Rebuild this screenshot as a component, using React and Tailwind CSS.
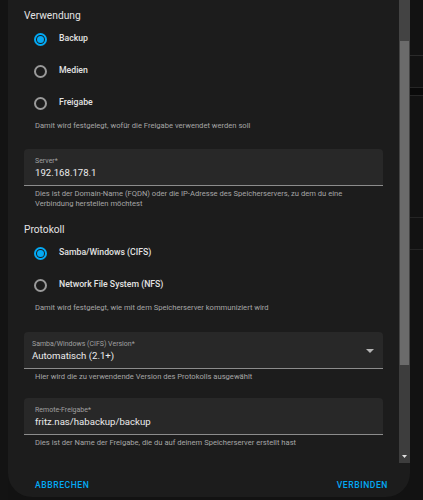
import React from 'react';

function Radio({ label, checked }) {
  return (
    <div className="h-[32px] flex items-center">
      <div className="w-[32px] flex justify-center">
        {checked ? (
          <div className="w-[13px] h-[13px] rounded-full border-2 border-[#03a9f4] flex items-center justify-center">
            <div className="w-[7px] h-[7px] rounded-full bg-[#03a9f4]" />
          </div>
        ) : (
          <div className="w-[13px] h-[13px] rounded-full border-2 border-[#9a9a9a]" />
        )}
      </div>
      <span className="ml-[3px] text-[8.7px] font-medium text-[#e3e3e3]">{label}</span>
    </div>
  );
}

function Helper({ children, className = '' }) {
  return (
    <div className={'pl-[11px] pr-[30px] text-[7.6px] leading-[10px] text-[#a6a6a6] ' + className}>
      {children}
    </div>
  );
}

function Field({ label, value, select, pad = 'px-[11px]' }) {
  return (
    <div className={'h-[37px] bg-[#282828] rounded-t-[4px] border-b border-[#8c8c8c] flex items-center ' + pad}>
      <div className="flex-1">
        <div className="text-[7px] leading-[10px] text-[#a0a0a0]">{label}</div>
        <div className="text-[9.6px] leading-[13px] text-[#ececec]">{value}</div>
      </div>
      {select && (
        <svg width="8" height="4" viewBox="0 0 8 4" className="mr-[9px] mt-[1px]">
          <path d="M0 0 L8 0 L4 4 Z" fill="#b5b5b5" />
        </svg>
      )}
    </div>
  );
}

export default function App() {
  return (
    <div
      className="w-[423px] h-[500px] bg-[#121212] flex overflow-hidden"
      style={{ fontFamily: 'Roboto, "Liberation Sans", sans-serif' }}
    >
      <div className="w-[8px] shrink-0 bg-[#131313]" />
      <div className="w-[402px] h-[497px] shrink-0 bg-[#1c1c1c] rounded-b-[24px] flex flex-col overflow-hidden">
        <div className="h-[463px] flex">
          <div className="flex-1 pl-[16px] pr-[16px] overflow-hidden">
            <div className="pt-[9px] h-[23px] text-[10.2px] leading-[14px] text-[#e3e3e3]">Verwendung</div>
            <Radio label="Backup" checked />
            <Radio label="Medien" />
            <Radio label="Freigabe" />
            <Helper className="mt-[2px]">Damit wird festgelegt, wofür die Freigabe verwendet werden soll</Helper>
            <div className="mt-[18px]">
              <Field label="Server*" value="192.168.178.1" />
            </div>
            <Helper className="mt-[3px]">
              Dies ist der Domain-Name (FQDN) oder die IP-Adresse des Speicherservers, zu dem du eine Verbindung herstellen möchtest
            </Helper>
            <div className="mt-[14px] h-[14px] text-[10.2px] leading-[14px] text-[#e3e3e3]">Protokoll</div>
            <Radio label="Samba/Windows (CIFS)" checked />
            <Radio label="Network File System (NFS)" />
            <Helper className="mt-[2px]">Damit wird festgelegt, wie mit dem Speicherserver kommuniziert wird</Helper>
            <div className="mt-[19px]">
              <Field label="Samba/Windows (CIFS) Version*" value="Automatisch (2.1+)" select pad="pl-[8px]" />
            </div>
            <Helper className="mt-[3px]">Hier wird die zu verwendende Version des Protokolls ausgewählt</Helper>
            <div className="mt-[16px]">
              <Field label="Remote-Freigabe*" value="fritz.nas/habackup/backup" />
            </div>
            <Helper className="mt-[3px]">Dies ist der Name der Freigabe, die du auf deinem Speicherserver erstellt hast</Helper>
          </div>
          <div className="w-[11px] shrink-0 bg-[#434343] flex flex-col">
            <div className="h-[41px]" />
            <div className="h-[324px] mx-[1px] bg-[#6b6b6b]" />
            <div className="flex-1 bg-[#3d3d3d] flex items-end justify-center pb-[5px]">
              <svg width="5" height="3" viewBox="0 0 5 3">
                <path d="M0 0 L5 0 L2.5 3 Z" fill="#e0e0e0" />
              </svg>
            </div>
          </div>
        </div>
        <div className="flex-1 flex items-center justify-between pl-[27px] pr-[22px] pt-[10px]">
          <span className="text-[8.6px] font-medium tracking-[0.55px] text-[#03a9f4]">ABBRECHEN</span>
          <span className="text-[8.6px] font-medium tracking-[0.55px] text-[#03a9f4]">VERBINDEN</span>
        </div>
      </div>
      <div className="flex-1 flex flex-col bg-[#121212]">
        <div className="h-[55px]" />
        <div className="h-px bg-[#2a2a2a]" />
        <div className="h-[31px]" />
        <div className="h-[9px] bg-[#0a0a0a] border-y border-[#262626]" />
        <div className="h-[121px]" />
        <div className="h-px bg-[#242424]" />
        <div className="h-[31px]" />
        <div className="h-px bg-[#242424]" />
      </div>
    </div>
  );
}
